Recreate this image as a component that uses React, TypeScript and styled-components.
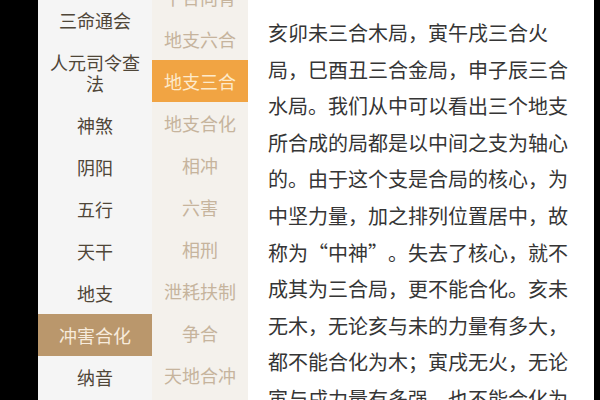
import React from 'react';
import styled, { createGlobalStyle } from 'styled-components';

const GlobalStyle = createGlobalStyle`
    html, body {
        margin: 0;
        padding: 0;
        background: #000;
    }
    body {
        font-family: "Noto Sans CJK SC", "Noto Sans", sans-serif;
    }
`;

const StyledScreen = styled.div`
    display: flex;
    width: 600px;
    height: 400px;
    overflow: hidden;
    background: #000;
    padding: 0 6px 0 38px;
    box-sizing: border-box;
`;

const StyledPrimaryNav = styled.div`
    display: flex;
    flex-direction: column;
    width: 114px;
    flex-shrink: 0;
    background: #f5f5f5;
    overflow: hidden;
`;

const StyledSecondaryNav = styled.div`
    width: 96px;
    flex-shrink: 0;
    background: #f4f1ec;
    overflow: hidden;
`;

const StyledScrolledList = styled.div<{ $offset: number }>`
    display: flex;
    flex-direction: column;
    margin-top: ${props => -props.$offset}px;
`;

const StyledNavItem = styled.div<{ $active?: boolean; $tone: 'primary' | 'secondary' }>`
    padding: 10.5px 6px;
    font-size: 18px;
    line-height: 21px;
    text-align: center;
    color: ${props => props.$active
        ? props.$tone === 'primary' ? '#f7ebdc' : '#fdeacb'
        : props.$tone === 'primary' ? '#4f4638' : '#c6b49d'};
    background: ${props => props.$active
        ? props.$tone === 'primary' ? '#ba976c' : '#f1a443'
        : 'transparent'};
`;

const StyledArticle = styled.div`
    flex: 1;
    background: #fff;
    padding: 15px 26px 0 20px;
    overflow: hidden;
`;

const StyledParagraph = styled.p`
    margin: 0;
    width: 300px;
    font-size: 20px;
    line-height: 36.6px;
    color: #353535;
    line-break: strict;
    text-spacing-trim: space-all;
`;

// full-width quote marks, as the phone font draws them
const StyledQuote = styled.span`
    font-feature-settings: "fwid" 1;
`;

const primaryItems = ['三命通会', '人元司令查法', '神煞', '阴阳', '五行', '天干', '地支', '冲害合化', '纳音'];
const secondaryItems = ['干合向背', '地支六合', '地支三合', '地支合化', '相冲', '六害', '相刑', '泄耗扶制', '争合', '天地合冲'];

const articleStart = '亥卯未三合木局，寅午戌三合火局，巳酉丑三合金局，申子辰三合水局。我们从中可以看出三个地支所合成的局都是以中间之支为轴心的。由于这个支是合局的核心，为中坚力量，加之排列位置居中，故称为';
const articleEnd = '。失去了核心，就不成其为三合局，更不能合化。亥未无木，无论亥与未的力量有多大，都不能合化为木；寅戌无火，无论寅与戌力量有多强，也不能合化为火。';

const App = () => {
    return (
        <>
            <GlobalStyle />
            <StyledScreen>
                <StyledPrimaryNav>
                    <StyledScrolledList $offset={1}>
                        {primaryItems.map(item => (
                            <StyledNavItem key={item} $tone="primary" $active={item === '冲害合化'}>{item}</StyledNavItem>
                        ))}
                    </StyledScrolledList>
                </StyledPrimaryNav>
                <StyledSecondaryNav>
                    <StyledScrolledList $offset={24}>
                        {secondaryItems.map(item => (
                            <StyledNavItem key={item} $tone="secondary" $active={item === '地支三合'}>{item}</StyledNavItem>
                        ))}
                    </StyledScrolledList>
                </StyledSecondaryNav>
                <StyledArticle>
                    <StyledParagraph>
                        {articleStart}<StyledQuote>“</StyledQuote>中神<StyledQuote>”</StyledQuote>{articleEnd}
                    </StyledParagraph>
                </StyledArticle>
            </StyledScreen>
        </>
    );
}

export default App;
